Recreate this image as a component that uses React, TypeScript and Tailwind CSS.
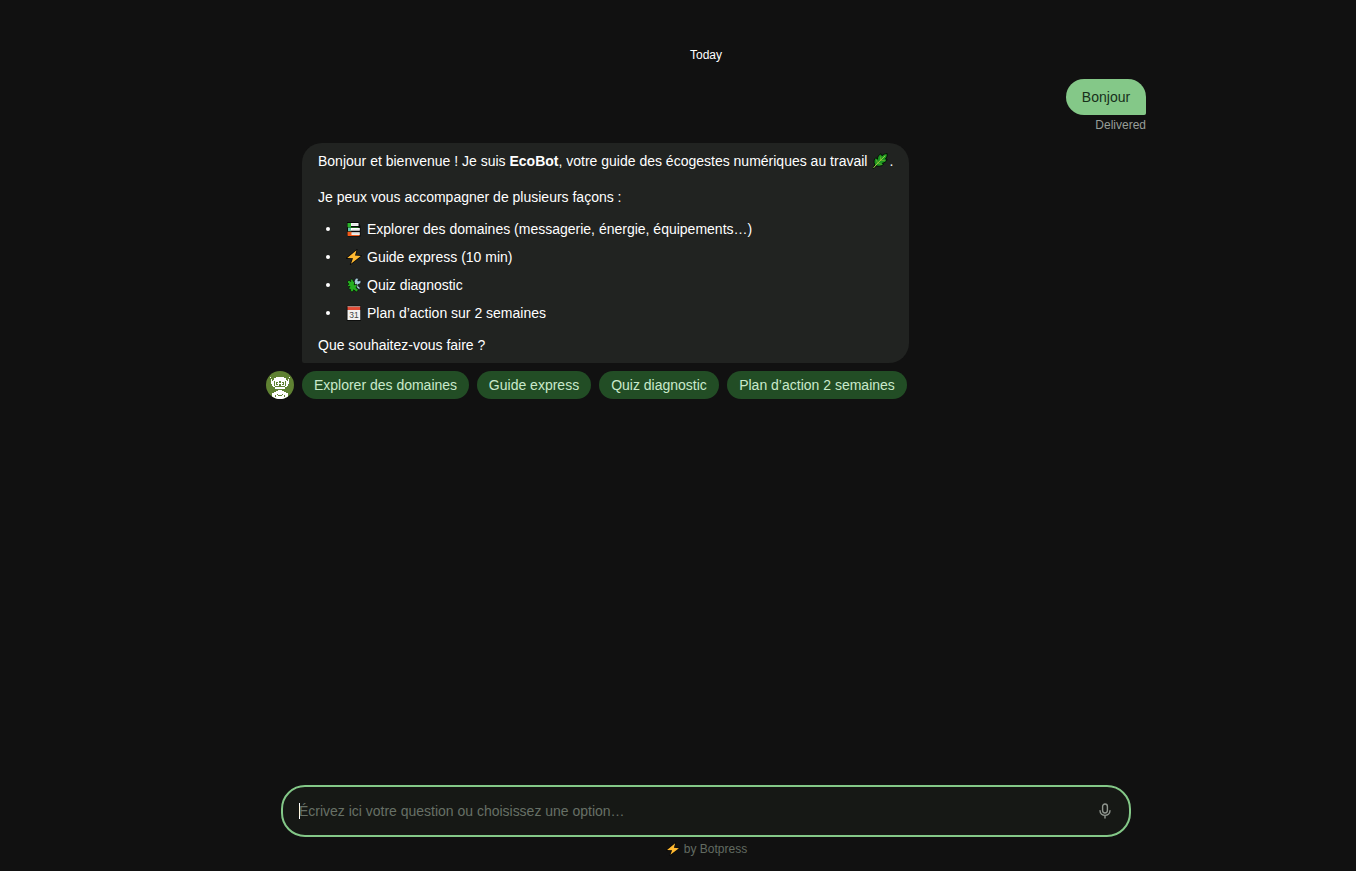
import type { ReactNode } from "react";

function Leaf() {
  return (
    <svg viewBox="0 0 16 16" className="h-4 w-4 shrink-0">
      <path
        d="M1 15.2L2.8 12C1.4 9 2 6.3 3.8 4.6L5.5 6.2C5.5 3.8 6.5 1.8 9 .8L10 2.8C11.2 1.4 13 .7 15.2 .6C15.4 3 14.8 4.6 13.4 6L15.2 6.6C14 9 12.4 10 10.4 10.2L11.6 11.4C9.3 13.4 6.6 13.7 4.2 12.8L2 15.5Z"
        fill="#1b9420"
        stroke="#050805"
        strokeWidth=".9"
      />
      <path d="M1.5 14.8L6 9.8L13.3 2.6" stroke="#b2d94a" strokeWidth=".9" fill="none" />
      <path d="M5.6 10.2L4.4 6.8M8.4 7.4L8.8 3.5M6.2 10.2L9.6 11.4M9 7.3L12.8 7.6" stroke="#8fbd35" strokeWidth=".6" fill="none" />
    </svg>
  );
}

function Books() {
  return (
    <svg viewBox="0 0 16 16" className="h-4 w-4 shrink-0">
      <path d="M1 1H12.5L14.5 5V15.5H2L1 14Z" fill="#080808" />
      <path d="M4 2H12.5V5H4Z" fill="#f4f4f4" />
      <path d="M1.5 2H5V6H12.5V6.6H2L1.5 6Z" fill="#2bb52b" />
      <path d="M5 7H13.8V9.7H5Z" fill="#fff" />
      <path d="M2 6.7H5V10.2H2Z" fill="#69c6ae" />
      <path d="M5 11.2H13.8V14H5Z" fill="#f5f1ec" />
      <path d="M1.5 10.8H5.5V14H13.5V15H2L1.5 14.5Z" fill="#f05a1a" />
      <path d="M6 3.6H12M6 8.4H13M6 12.6H13" stroke="#cfcfcf" strokeWidth=".5" />
    </svg>
  );
}

function Bolt({ className }: { className: string }) {
  return (
    <svg viewBox="0 0 16 16" className={className}>
      <path
        d="M10.5 1.3L1.2 9L7 9.3L5 14.7L14.8 7L9 6.6Z"
        fill="#ffb931"
        stroke="#080808"
        strokeWidth="1.4"
        paintOrder="stroke"
      />
    </svg>
  );
}

function Puzzle() {
  return (
    <svg viewBox="0 0 16 16" className="h-4 w-4 shrink-0">
      <path
        d="M8 5L9 2.5L10.5 1L12.5 1.6L11.8 4L14.3 3.5L15.2 5L13.5 7.2L12 7.5L12.6 9.5L14.5 11L13 12.5L9 9Z"
        fill="#a9cddd"
        stroke="#080808"
        strokeWidth=".7"
      />
      <path
        d="M1 5L3 3.2L4.8 4.6C3.7 1.5 7 1.2 7 3.8L8.8 5.5L8.2 7.8L10.8 7.2L11.2 9.2L9.8 10.5L12.5 12.8L10.5 15L7.6 12.8C7.6 15.7 3.8 15 4.6 12.4L2.2 11.5L4 9.5C1 10 .8 7.5 3 7.2Z"
        fill="#25ad1f"
        stroke="#071007"
        strokeWidth=".7"
      />
    </svg>
  );
}

function Calendar() {
  return (
    <svg viewBox="0 0 16 16" className="h-4 w-4 shrink-0">
      <path d="M.8 .8H15V15.8H.8Z" fill="#080808" />
      <path d="M1.5 1.5H14.3V5H1.5Z" fill="#e34b35" />
      <path d="M1.5 5H14.3V15H1.5Z" fill="#f2f2f2" />
      <path d="M1.5 1.6H14.3" stroke="#b8a9a5" strokeWidth=".8" />
      <text x="8" y="13" textAnchor="middle" fontSize="8.5" fontFamily="Liberation Sans, sans-serif" fill="#444">
        31
      </text>
    </svg>
  );
}

function Avatar() {
  return (
    <svg viewBox="0 0 28 28" className="h-7 w-7 shrink-0">
      <circle cx="14" cy="14" r="14" fill="#5f8132" />
      {/* head */}
      <path d="M10 6H18V7H20V9H21V10H22V15H21V16H19V18H9V16H7V15H6V10H7V9H8V7H10Z" fill="#fff" />
      {/* antennas */}
      <path d="M4 6H5V7H4ZM5 8H6V13H5ZM23 6H24V7H23ZM22 8H23V13H22Z" fill="#fff" />
      {/* goggles */}
      <path d="M8 10H20V15H19V16H9V15H8Z" fill="#5f8132" />
      <path d="M9 10H13V15H9ZM15 10H19V15H15ZM13 12H15V13H13Z" fill="#fff" />
      <path d="M10 11H12V14H10ZM16 11H18V14H16Z" fill="#5f8132" />
      <path d="M11 12H12V13H11ZM16 12H17V13H16ZM10 16H18V17H10Z" fill="#fff" />
      {/* body */}
      <path d="M12 19H16V20H18V21H20V22H22V25.4C17 28.8 11 28.8 6 25.4V22H8V21H10V20H12Z" fill="#fff" />
      <path d="M9 24H10V26H9ZM18 24H19V26H18ZM11 23H12V24H11ZM16 23H17V24H16ZM12 24H16V25H12Z" fill="#5f8132" />
    </svg>
  );
}

function Mic() {
  return (
    <svg viewBox="0 0 16 16" className="h-4 w-4" fill="none" stroke="#8f958e" strokeWidth="1.4" strokeLinecap="round">
      <rect x="5.6" y="1" width="4.8" height="9" rx="2.4" />
      <path d="M3 7.6C3 14 13 14 13 7.6M8 12.6V15" />
    </svg>
  );
}

function Option({ icon, children }: { icon: ReactNode; children: ReactNode }) {
  return (
    <li className="flex h-5 items-center">
      <span className="mr-4 h-1 w-1 rounded-full bg-white" />
      {icon}
      <span className="ml-[5px]">{children}</span>
    </li>
  );
}

const chips = [
  { label: "Explorer des domaines", width: "w-[167px]" },
  { label: "Guide express", width: "w-[114px]" },
  { label: "Quiz diagnostic", width: "w-[120px]" },
  { label: "Plan d’action 2 semaines", width: "w-[180px]" },
];

export default function App() {
  return (
    <div className="flex h-[871px] flex-col items-center overflow-hidden bg-[#111111] pl-14 font-['Liberation_Sans',Arial,sans-serif] text-sm leading-5 text-white">
      <main className="flex w-[880px] flex-1 flex-col pt-[47px]">
        <p className="text-center text-xs leading-4">Today</p>
        <div className="mt-4 flex flex-col items-end">
          <div className="flex h-9 w-20 items-center justify-center rounded-[20px] rounded-br-[2px] bg-[#84c888] text-[#17301a]">
            Bonjour
          </div>
          <p className="mt-0.5 text-xs leading-4 text-[#989e98]">Delivered</p>
        </div>
        <div className="mt-[10px] flex items-end gap-2">
          <Avatar />
          <div className="flex flex-col gap-2">
            <section className="h-[220px] w-[607px] rounded-[20px] rounded-bl-[2px] bg-[#212321] px-4 py-2 whitespace-nowrap">
              <p className="flex items-center">
                <span>
                  Bonjour et bienvenue ! Je suis <strong>EcoBot</strong>, votre guide des écogestes numériques au travail
                </span>
                <span className="ml-[5px] flex items-center gap-px">
                  <Leaf />
                  <span>.</span>
                </span>
              </p>
              <p className="mt-4">Je peux vous accompagner de plusieurs façons :</p>
              <ul className="mt-3 flex flex-col gap-2 pl-2">
                <Option icon={<Books />}>Explorer des domaines (messagerie, énergie, équipements…)</Option>
                <Option icon={<Bolt className="h-4 w-4 shrink-0" />}>Guide express (10 min)</Option>
                <Option icon={<Puzzle />}>Quiz diagnostic</Option>
                <Option icon={<Calendar />}>Plan d’action sur 2 semaines</Option>
              </ul>
              <p className="mt-3">Que souhaitez-vous faire ?</p>
            </section>
            <div className="flex gap-2">
              {chips.map((chip) => (
                <button key={chip.label} className={`h-7 rounded-full bg-[#224d25] whitespace-nowrap text-[#c9e9cb] ${chip.width}`}>
                  {chip.label}
                </button>
              ))}
            </div>
          </div>
        </div>
      </main>
      <div className="flex h-[52px] w-[850px] items-center justify-between rounded-[24px] border-2 border-[#84c888] bg-[#161815] pr-4 pl-4">
        <div className="flex items-center">
          <span className="h-4 w-px bg-white" />
          <span className="-ml-px tracking-[-0.01px] text-[#677066]">Écrivez ici votre question ou choisissez une option…</span>
        </div>
        <Mic />
      </div>
      <footer className="flex h-[34px] items-start gap-1 pt-1 pl-px text-xs leading-4 text-[#626b61]">
        <Bolt className="mt-px h-3.5 w-3.5" />
        by Botpress
      </footer>
    </div>
  );
}
